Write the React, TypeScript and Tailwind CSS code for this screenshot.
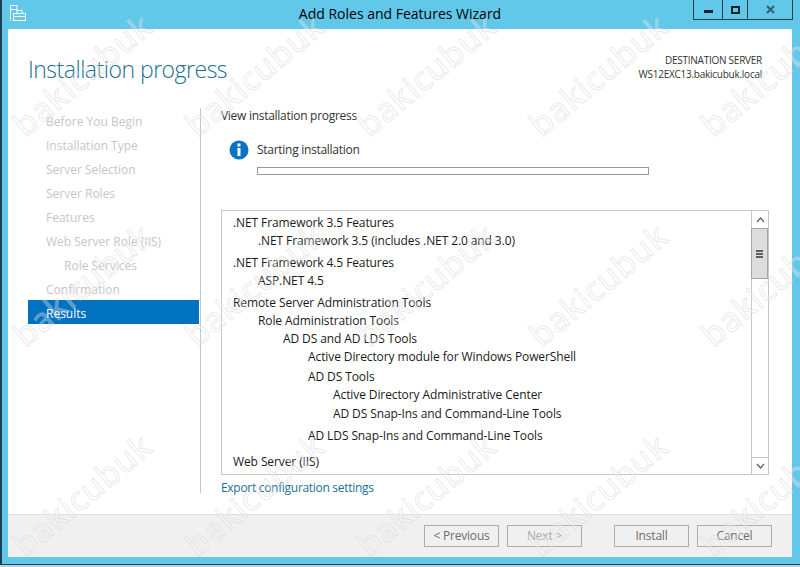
import React from 'react';

const steps = [
  { label: 'Before You Begin', sub: false },
  { label: 'Installation Type', sub: false },
  { label: 'Server Selection', sub: false },
  { label: 'Server Roles', sub: false },
  { label: 'Features', sub: false },
  { label: 'Web Server Role (IIS)', sub: false },
  { label: 'Role Services', sub: true },
  { label: 'Confirmation', sub: false },
];

const rows = [
  { text: '.NET Framework 3.5 Features', cls: 'pl-[11px]' },
  { text: '.NET Framework 3.5 (includes .NET 2.0 and 3.0)', cls: 'pl-[36px]' },
  { text: '.NET Framework 4.5 Features', cls: 'pl-[11px] mt-1' },
  { text: 'ASP.NET 4.5', cls: 'pl-[36px]' },
  { text: 'Remote Server Administration Tools', cls: 'pl-[11px] mt-1' },
  { text: 'Role Administration Tools', cls: 'pl-[36px]' },
  { text: 'AD DS and AD LDS Tools', cls: 'pl-[61px]' },
  { text: 'Active Directory module for Windows PowerShell', cls: 'pl-[86px]' },
  { text: 'AD DS Tools', cls: 'pl-[86px] mt-[2px]' },
  { text: 'Active Directory Administrative Center', cls: 'pl-[111px]' },
  { text: 'AD DS Snap-Ins and Command-Line Tools', cls: 'pl-[111px] mt-px' },
  { text: 'AD LDS Snap-Ins and Command-Line Tools', cls: 'pl-[86px] mt-1' },
  { text: 'Web Server (IIS)', cls: 'pl-[11px] mt-2' },
];

function WizardIcon() {
  return (
    <svg width="17" height="17" viewBox="0 0 17 17" fill="none" stroke="white" strokeWidth="1">
      <path d="M.5 15.5V.5h6.5v5" />
      <path d="M.5 4.5h6.5" />
      <path d="M7 8.5V5.5h5v3" />
      <rect x="3.5" y="8.5" width="12" height="7" fill="#62c8ea" />
      <path d="M3.5 11.5h12M9.5 10.5v2" />
    </svg>
  );
}

function WizardButton({ label, color }: { label: string; color: string }) {
  return (
    <div className={`w-[75px] h-[22px] border border-[#adadad] flex items-center justify-center text-[12px] tracking-[-0.2px] ${color}`}>
      {label}
    </div>
  );
}

function Watermark() {
  const cells = Array.from({ length: 20 });
  return (
    <div className="absolute inset-0 overflow-hidden pointer-events-none">
      <div className="grid grid-cols-[repeat(5,172px)] auto-rows-[210px] -mt-[30px] -ml-[4px]">
        {cells.map((_, i) => (
          <div key={i} className="flex items-center justify-center">
            <span className="-rotate-[40deg] text-[33px] tracking-[1px] text-white/30 [-webkit-text-stroke:1px_rgba(205,205,205,0.42)] font-['Noto_Sans',sans-serif]">
              bakicubuk
            </span>
          </div>
        ))}
      </div>
    </div>
  );
}

export default function App() {
  return (
    <div className="relative w-[800px] h-[567px] overflow-hidden bg-[#b5d5e0] font-['Open_Sans','Noto_Sans',sans-serif] text-[12px]">
      <div className="h-[565px] flex flex-col bg-[#62c8ea] border-l-2 border-b border-[#1d3f50]">
        {/* Title bar */}
        <div className="h-[29px] shrink-0 flex relative">
          <div className="pl-[8px] pt-[5px]">
            <WizardIcon />
          </div>
          <div className="absolute left-0 right-0 top-[4px] text-center text-[14px] leading-[20px] text-black -ml-[2px]">
            Add Roles and Features Wizard
          </div>
          <div className="absolute right-[7px] top-0 w-[100px] h-[20px] flex border border-t-0 border-[#1d3f50] text-[#1d3f50]">
            <div className="w-[29px] border-r border-[#1d3f50] flex items-center justify-center">
              <div className="w-[9px] h-[3px] mt-[3px] bg-[#0c2430]" />
            </div>
            <div className="w-[25px] border-r border-[#1d3f50] flex items-center justify-center">
              <div className="w-[9px] h-[8px] border-2 border-[#0c2430]" />
            </div>
            <div className="flex-1 flex items-center justify-center">
              <svg width="9" height="9" viewBox="0 0 9 9" stroke="#2d5f75" strokeWidth="2">
                <path d="M1 1l7 7M8 1l-7 7" />
              </svg>
            </div>
          </div>
        </div>

        {/* Window body */}
        <div className="flex-1 mb-[7px] ml-[6px] mr-[8px] bg-white flex flex-col">
          <div className="h-[79px] shrink-0 flex justify-between pl-[20px] pr-[30px]">
            <div className="text-[23px] tracking-[-0.5px] font-light leading-[32px] pt-[24px] text-[#1b6f91]">Installation progress</div>
            <div className="text-right text-[10px] tracking-[-0.25px] leading-[14px] pt-[24px] text-[#333]">
              <div>DESTINATION SERVER</div>
              <div>WS12EXC13.bakicubuk.local</div>
            </div>
          </div>

          <div className="flex-1 flex">
            {/* Steps */}
            <div className="w-[193px] shrink-0 pl-[20px] pt-[1px] h-[385px] border-r border-[#c4c4c4]">
              <div className="pt-[1px]">
                {steps.map((s) => (
                  <div
                    key={s.label}
                    className={`h-[24px] leading-[24px] text-[#c6c6c6] ${s.sub ? 'pl-[36px]' : 'pl-[18px]'}`}
                  >
                    {s.label}
                  </div>
                ))}
                <div className="h-[24px] leading-[27px] -mt-[2px] pl-[18px] mr-[1px] bg-[#0072c0] text-white">Results</div>
              </div>
            </div>

            {/* Content */}
            <div className="flex-1 pl-[20px] pr-[23px] tracking-[-0.28px]">
              <div className="h-[18px] leading-[18px] -mt-px text-[#333]">View installation progress</div>
              <div className="flex items-center mt-[15px] ml-[8px] h-[20px]">
                <svg width="20" height="20" viewBox="0 0 20 20">
                  <circle cx="10" cy="10" r="9.5" fill="#0a72c4" />
                  <rect x="8.5" y="3.5" width="3" height="3" fill="white" />
                  <rect x="8.5" y="8" width="3" height="8" fill="white" />
                </svg>
                <span className="ml-[8px] text-[#333]">Starting installation</span>
              </div>
              <div className="w-[392px] h-[8px] ml-[36px] mt-[7px] border border-[#999] bg-white" />

              <div className="h-[265px] mt-[35px] border border-[#c8c8c8] flex">
                <div className="flex-1 pt-[3px] font-medium tracking-[-0.1px] text-[#1a1a1a] overflow-hidden">
                  {rows.map((r) => (
                    <div key={r.text} className={`h-[18px] leading-[18px] whitespace-nowrap ${r.cls}`}>
                      {r.text}
                    </div>
                  ))}
                </div>
                <div className="w-[17px] shrink-0 border-l border-[#c8c8c8] flex flex-col">
                  <div className="h-[17px] flex items-center justify-center">
                    <svg width="9" height="6" viewBox="0 0 9 6" fill="none" stroke="#606060" strokeWidth="1.2">
                      <path d="M1 5l3.5-4L8 5" />
                    </svg>
                  </div>
                  <div className="h-[51px] bg-[#dcdcdc] border border-[#a6a6a6] -ml-px flex flex-col items-center justify-center gap-px">
                    <div className="w-[7px] h-[2px] bg-[#606060]" />
                    <div className="w-[7px] h-[2px] bg-[#606060]" />
                    <div className="w-[7px] h-[2px] bg-[#606060]" />
                  </div>
                  <div className="flex-1" />
                  <div className="h-[17px] border-t border-[#c8c8c8] flex items-center justify-center">
                    <svg width="9" height="6" viewBox="0 0 9 6" fill="none" stroke="#606060" strokeWidth="1.2">
                      <path d="M1 1l3.5 4L8 1" />
                    </svg>
                  </div>
                </div>
              </div>

              <div className="h-[18px] leading-[18px] mt-[4px] tracking-[-0.3px] text-[#1b6f91]">Export configuration settings</div>
            </div>
          </div>

          {/* Footer */}
          <div className="h-[43px] shrink-0 bg-[#f0f0f0] border-t border-[#dfdfdf] flex items-center pl-[416px]">
            <WizardButton label="< Previous" color="text-[#6d6d6d]" />
            <div className="w-[8px]" />
            <WizardButton label="Next >" color="text-[#a8a8a8]" />
            <div className="w-[32px]" />
            <WizardButton label="Install" color="text-[#6d6d6d]" />
            <div className="w-[8px]" />
            <WizardButton label="Cancel" color="text-[#6d6d6d]" />
          </div>
        </div>
      </div>
      <Watermark />
    </div>
  );
}
